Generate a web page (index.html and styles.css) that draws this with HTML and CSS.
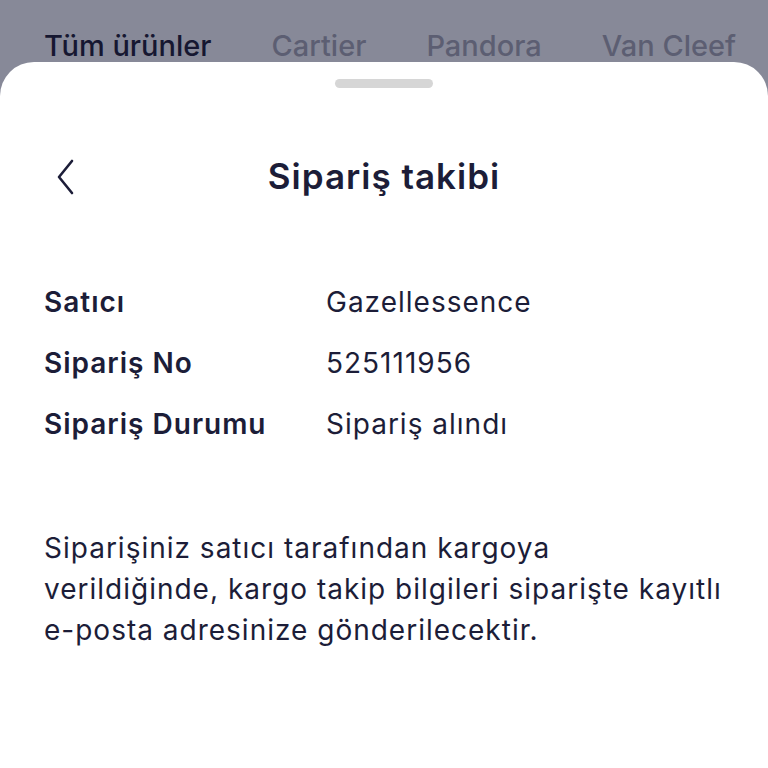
FILE: index.html
```html
<!DOCTYPE html>
<html lang="tr">
<head>
	<meta charset="UTF-8">
	<meta name="viewport" content="width=device-width, initial-scale=1.0">
	<title>Sipariş takibi</title>
	<link rel="stylesheet" href="styles.css">
</head>
<body>
	<div class="tabs">
		<div class="tabs__item active">Tüm ürünler</div>
		<div class="tabs__item">Cartier</div>
		<div class="tabs__item">Pandora</div>
		<div class="tabs__item">Van Cleef</div>
	</div>
	<div class="sheet">
		<div class="sheet__handle"></div>
		<div class="sheet__header">
			<svg class="sheet__back" width="20" height="36" viewBox="0 0 20 36">
				<path d="M16 2 L3 18 L16 34" fill="none" stroke="#1c1d38" stroke-width="2.6" stroke-linecap="round" stroke-linejoin="round"/>
			</svg>
			<h2>Sipariş takibi</h2>
		</div>
		<div class="info">
			<div class="info__label">Satıcı</div>
			<div class="info__value">Gazellessence</div>
			<div class="info__label">Sipariş No</div>
			<div class="info__value">525111956</div>
			<div class="info__label">Sipariş Durumu</div>
			<div class="info__value">Sipariş alındı</div>
		</div>
		<p class="note">Siparişiniz satıcı tarafından kargoya verildiğinde, kargo takip bilgileri siparişte kayıtlı e-posta adresinize gönderilecektir.</p>
	</div>
</body>
</html>
```
FILE: styles.css
```css
*{
	margin: 0;
	padding: 0;
	box-sizing: border-box;
}
body{
	height: 100vh;
	overflow: hidden;
	background-color: #878998;
	font-family: "Inter", "Noto Sans", sans-serif;
	color: #1c1d38;
}

.tabs{
	display: flex;
	gap: 60px;
	height: 62px;
	padding: 28px 0 0 44px;
	overflow: hidden;
	white-space: nowrap;
}
.tabs__item{
	font-size: 29px;
	font-weight: 500;
	line-height: 36px;
	color: #5c5e72;
}
.tabs__item.active{
	color: #161731;
}

.sheet{
	height: 706px;
	background-color: #fff;
	border-radius: 34px 34px 0 0;
	padding: 17px 44px 0 44px;
}
.sheet__handle{
	width: 98px;
	height: 9px;
	margin: 0 auto;
	border-radius: 5px;
	background-color: #d6d6d6;
}

.sheet__header{
	position: relative;
	display: flex;
	justify-content: center;
	align-items: center;
	height: 40px;
	margin-top: 71px;
}
.sheet__back{
	position: absolute;
	left: 12px;
	top: 0;
}
h2{
	font-size: 35px;
	font-weight: 600;
	letter-spacing: 1px;
	line-height: 40px;
	margin-top: -6px;
}

.info{
	display: grid;
	grid-template-columns: 282px 1fr;
	row-gap: 26px;
	margin-top: 86px;
	font-size: 28px;
	letter-spacing: 1px;
	line-height: 35px;
}
.info__label{
	font-weight: 600;
}

.note{
	margin-top: 86px;
	font-size: 28px;
	letter-spacing: 1px;
	line-height: 41px;
}
```
